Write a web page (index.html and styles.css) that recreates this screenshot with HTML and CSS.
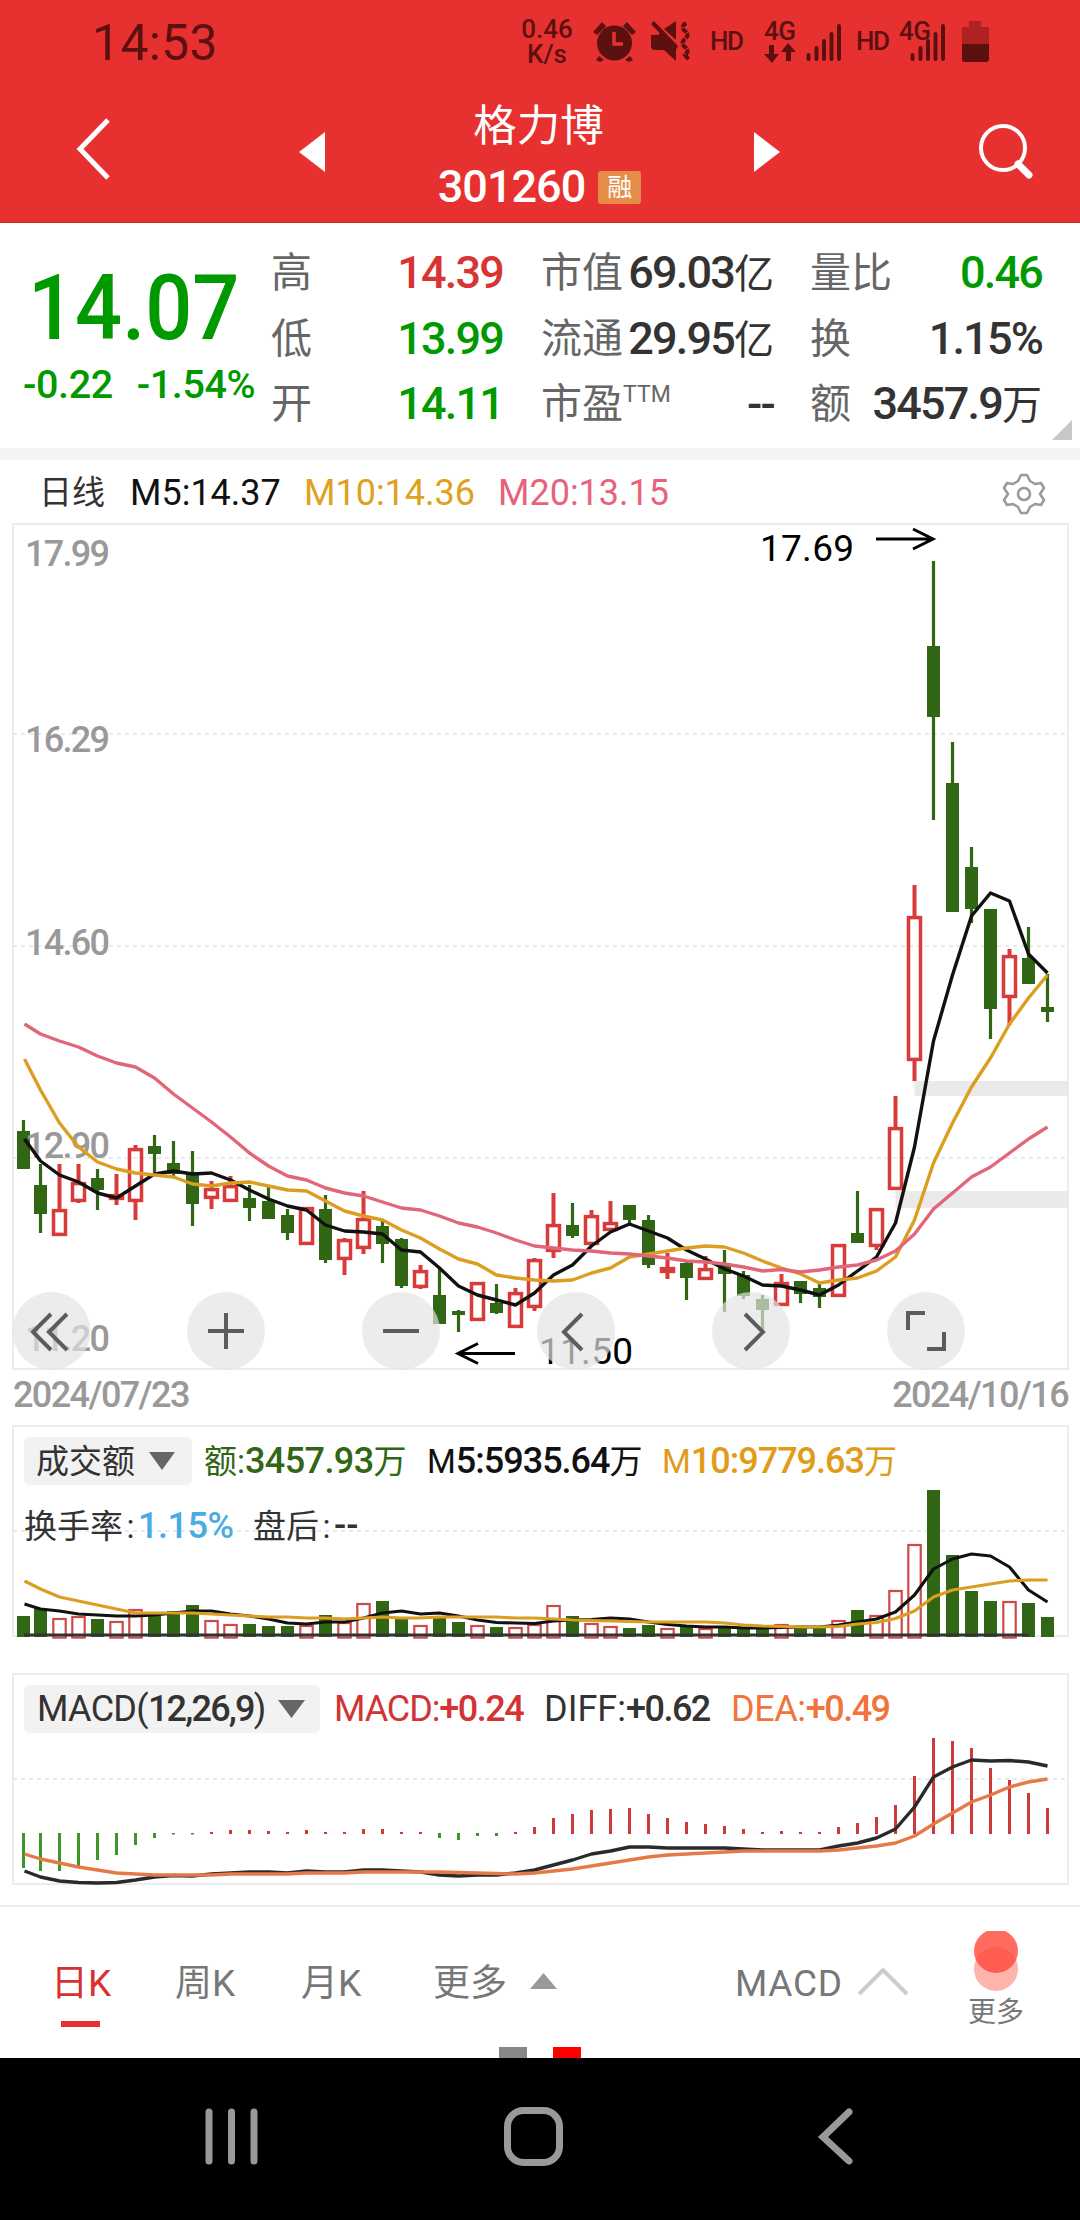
FILE: index.html
```html
<!DOCTYPE html>
<html lang="zh-CN">
<head>
<meta charset="utf-8">
<title>格力博 301260</title>
<link rel="stylesheet" href="styles.css">
</head>
<body>
<header class="top">
  <div class="status">
    <span class="clock">14:53</span>
    <div class="net"><span>0.46</span><span>K/s</span></div>
    <svg class="status-icons" width="412" height="60" viewBox="580 10 412 60">
      <g fill="#5c1010" stroke="none">
        <circle cx="614.500" cy="43" r="17.500"/>
        <path d="M593 32l9-10 4 4-9 9zM636 32l-9-10-4 4 9 9zM599 56l5 4-4 2-4-2zM630 56l-5 4 4 2 4-2z"/>
        <path d="M651 35h7l4-4 14 14v16l-12-11h-9q-4 0-4-4zM664 29l12-8v19zM651 24l3-3 24 25-2 4z"/>
        <path d="M769 45h5v9h5l-7 9-8-9h5zM786 61h5v-9h5l-8-9-7 9h5z"/>
      </g>
      <path d="M614 32v12h9" fill="none" stroke="#e73030" stroke-width="3.500"/>
      <path d="M686 23q-6 4-1 8 5 4 0 8-5 4 0 8 5 4 0 8l4 5" fill="none" stroke="#5c1010" stroke-width="4" stroke-dasharray="5.500 1"/>
      <path d="M808.500 55v4M816.500 48v11M824 41v18M831.500 34v25M839 26v33M912.500 55v4M920.500 48v11M928 41v18M935.500 34v25M943 26v33" stroke="#5c1010" stroke-width="4" stroke-linecap="round"/>
      <path d="M969 21h12v6h8v17h-27V27h7z" fill="#ae2222"/>
      <path d="M962 44h27v15q0 3-3 3h-21q-3 0-3-3z" fill="#5c1010"/>
      <g class="sys" fill="#5c1010"><text x="710" y="50" textLength="34">HD</text><text x="764" y="40" textLength="32">4G</text><text x="856" y="50" textLength="34">HD</text><text x="899" y="40" textLength="32">4G</text></g>
    </svg>
  </div>
  <div class="titlebar">
    <svg width="40" height="66" viewBox="0 0 40 66"><path d="M36 4L8 33l28 29" fill="none" stroke="#fff" stroke-width="5"/></svg>
    <svg class="prev" width="26" height="40"><path d="M26 0v40L0 20z" fill="#fff"/></svg>
    <div class="name"><h1>格力博</h1><div class="code"><b>301260</b><i>融</i></div></div>
    <svg class="next" width="26" height="40"><path d="M0 0v40l26-20z" fill="#fff"/></svg>
    <svg class="find" width="56" height="60" viewBox="0 0 56 60"><circle cx="26" cy="26" r="22" fill="none" stroke="#fff" stroke-width="4"/><path d="M41 42l11 11" stroke="#fff" stroke-width="7" stroke-linecap="round"/></svg>
  </div>
</header>

<section class="quote">
  <div class="last"><div class="price"><span>14.07</span></div><div class="chg"><span>-0.22</span><span>-1.54%</span></div></div>
  <dl class="stats s1"><dt>高</dt><dd class="up">14.39</dd><dt>低</dt><dd class="down">13.99</dd><dt>开</dt><dd class="down">14.11</dd></dl>
  <dl class="stats s2"><dt>市值</dt><dd>69.03<em>亿</em></dd><dt>流通</dt><dd>29.95<em>亿</em></dd><dt>市盈<sup>TTM</sup></dt><dd>--</dd></dl>
  <dl class="stats s3"><dt>量比</dt><dd class="down">0.46</dd><dt>换</dt><dd>1.15%</dd><dt>额</dt><dd>3457.9<em>万</em></dd></dl>
  <svg class="corner" width="20" height="20"><path d="M20 0v20H0z" fill="#c8c8c8"/></svg>
</section>

<section class="legend">
  <span class="period">日线</span><span class="m5">M5:14.37</span><span class="m10">M10:14.36</span><span class="m20">M20:13.15</span>
  <svg class="gear" width="44" height="44" viewBox="-22 -22 44 44" fill="none" stroke="#999" stroke-width="2.500" stroke-linejoin="round"><path d="M-3-19h6l3 6 5 3 6-1 3 5-4 6 4 6-3 5-6-1-5 3-3 6h-6l-3-6-5-3-6 1-3-5 4-6-4-6 3-5 6 1 5-3z"/><circle r="6"/></svg>
</section>

<section class="kline">
  <svg id="kline" width="1080" height="850" viewBox="0 522 1080 850">
    <path class="frame" d="M13 524H1068V1369H13z"/>
    <path class="grid" d="M13 734H1068M13 946H1068M13 1158H1068"/>
    <path d="M914.500 1081H1069v15H914.500zM895.500 1191H1069v17H895.500z" fill="#eaeaea"/>
    <g id="candles"></g>
    <g class="axis"><text x="25" y="566" textLength="85">17.99</text><text x="25" y="752" textLength="85">16.29</text><text x="25" y="955" textLength="85">14.60</text><text x="25" y="1158" textLength="85">12.90</text><text x="25" y="1351" textLength="85">11.20</text></g>
    <g id="averages"></g>
    <g class="mark"><text x="760" y="561" textLength="94">17.69</text><text x="539" y="1364" textLength="94">11.50</text><path d="M876 539h56M913 529l20 10-20 10M515 1353.500h-56M478 1343.500l-20 10 20 10"/></g>
    <g fill="rgba(228,228,228,.69)"><circle cx="51.500" cy="1331" r="39"/><circle cx="226" cy="1331" r="39"/><circle cx="401" cy="1331" r="39"/><circle cx="576" cy="1331" r="39"/><circle cx="751" cy="1331" r="39"/><circle cx="926" cy="1331" r="39"/></g>
    <path class="ctl" d="M51 1314l-18 18 18 18M67 1314l-18 18 18 18M208 1331h36M226 1313v36M383 1331h36M582 1314l-18 18 18 18M745 1314l18 18-18 18M908 1330v-17h17M944 1332v17h-17"/>
  </svg>
  <div class="dates"><span>2024/07/23</span><span>2024/10/16</span></div>
</section>

<section class="panel volume">
  <svg id="volume" width="1080" height="216" viewBox="0 1424 1080 216">
    <path class="frame" d="M13 1426H1068V1636H13z"/><path class="grid" d="M13 1531H1068"/>
  </svg>
  <div class="readout">
    <div class="row"><span class="pill">成交额<svg width="26" height="18"><path d="M0 0h26L13 18z" fill="#666"/></svg></span><span class="v1">额:<b>3457.93</b>万</span><span class="v2">M<b>5:5935.64</b>万</span><span class="v3">M<b>10:9779.63</b>万</span></div>
    <div class="row second"><span class="v4">换手率<u>:</u><b>1.15%</b></span><span class="v5">盘后<u>:</u><b>--</b></span></div>
  </div>
</section>

<section class="panel macd">
  <svg id="macd" width="1080" height="216" viewBox="0 1672 1080 216">
    <path class="frame" d="M13 1674H1068V1884H13z"/><path class="grid" d="M13 1779H1068"/>
  </svg>
  <div class="readout">
    <div class="row"><span class="pill wide"><span>MACD(<b>12,26,9</b>)</span><svg width="27" height="18"><path d="M0 0h27L13.500 18z" fill="#666"/></svg></span><span class="d1">MACD:<b>+0.24</b></span><span class="d2">DIFF:<b>+0.62</b></span><span class="d3">DEA:<b>+0.49</b></span></div>
  </div>
</section>

<nav class="tabs">
  <span class="tab on">日K</span><span class="tab t2">周K</span><span class="tab t3">月K</span><span class="tab t4">更多</span>
  <svg class="tri" width="27" height="16"><path d="M0 16h27L13.500 0z" fill="#999"/></svg>
  <span class="tab t5">MACD</span>
  <svg class="chev" width="54" height="30"><path d="M3 28L27 4l24 24" fill="none" stroke="#ccc" stroke-width="4"/></svg>
  <div class="more"><svg width="44" height="60"><circle cx="22" cy="38" r="22" fill="#ff4b3c" opacity=".42"/><circle cx="22" cy="20" r="22" fill="#ff4b3c" opacity=".82"/></svg><span>更多</span></div>
</nav>
<div class="pager"><i></i><i class="cur"></i></div>

<footer class="sysnav">
  <svg width="1080" height="162" viewBox="0 2058 1080 162" fill="none" stroke="#999" stroke-width="7" stroke-linecap="round"><path d="M209 2112v49M231.500 2112v49M254 2112v49"/><rect x="507.500" y="2110.500" width="52" height="52" rx="16"/><path d="M849 2112l-26 25 26 24"/></svg>
</footer>
<script src="charts.js"></script>
</body>
</html>
```

FILE: styles.css
```css
* { box-sizing: border-box; margin: 0; padding: 0; }
body {
  width: 1080px; height: 2220px; overflow: hidden; background: #fff; color: #333;
  font-family: Roboto, "Noto Sans CJK SC", sans-serif;
  display: flex; flex-direction: column;
}
svg { display: block; flex: none; }
i, em { font-style: normal; }
u { text-decoration: none; }
span, dt, dd { white-space: nowrap; }

.top { height: 223px; flex: none; background: #e73030; border-bottom: 1px solid #b9302c; color: #fff; }
.status { display: flex; height: 80px; padding-top: 10px; color: #5c1010; }
.clock { width: 421px; flex: none; padding-left: 92px; font-size: 50px; line-height: 67px; letter-spacing: .3px; }
.net { width: 68px; margin-left: 92px; padding-top: 7px; display: flex; flex-direction: column; align-items: center; font-size: 26px; font-weight: 500; line-height: 25px; }
.status-icons { margin-left: -1px; }
.sys { font: 500 26px Roboto, sans-serif; }
.titlebar { display: flex; height: 142px; }
.titlebar > svg:first-child { margin: 36px 0 0 72px; }
.titlebar .prev { margin: 52px 0 0 187px; }
.name { width: 429px; text-align: center; padding-top: 15px; }
.name h1 { font-size: 43.500px; line-height: 64px; height: 65px; font-weight: 400; padding-right: 2px; }
.titlebar .next { margin-top: 52px; }
.find { margin: 42px 0 0 197px; }
.code { display: flex; align-items: center; justify-content: center; gap: 13px; height: 54px; }
.code b { font-size: 45px; line-height: 54px; font-weight: 500; letter-spacing: -1px; }
.code i { background: #e58d48; border-radius: 3px; width: 43px; height: 33px; font-size: 25px; line-height: 33px; }

.quote { height: 237px; flex: none; display: flex; border-bottom: 12px solid #f4f4f4; padding-top: 17px; }
.last { width: 271px; color: #090; font-weight: 500; }
.price { height: 118px; padding: 15px 0 0 28px; font-size: 91px; line-height: 106px; }
.price span { display: inline-block; transform: scaleX(.91); transform-origin: left; }
.chg { display: flex; gap: 24px; padding-left: 23px; font-size: 39.500px; line-height: 54px; letter-spacing: -.400px; }
.stats { display: grid; grid-auto-rows: 65.500px; font-size: 41px; line-height: 66px; }
.stats dt { color: #666; font-weight: 400; }
.stats dd { text-align: right; font-size: 45px; font-weight: 500; letter-spacing: -1.800px; }
.stats em { font-size: 40px; font-weight: 400; letter-spacing: 0; }
.stats sup { font-size: 23px; line-height: 0; vertical-align: 16px; }
.s1 { width: 232px; grid-template-columns: 82px 1fr; }
.s2 { width: 233px; margin-left: 38px; grid-template-columns: 82px 1fr; }
.s3 { width: 232px; margin-left: 36px; grid-template-columns: 41px 1fr; }
.stats .up { color: #d93434; }
.stats .down { color: #090; }
.corner { margin: 180px 0 0 10px; }

.legend { height: 62px; flex: none; display: flex; font-size: 36px; line-height: 66px; }
.legend .period { width: 130px; padding-left: 39px; font-size: 33px; }
.legend .m5 { width: 174px; color: #111; }
.legend .m10 { width: 194px; color: #e0a020; }
.legend .m20 { width: 504px; color: #e8637a; }
.gear { margin-top: 12px; }

.kline { height: 902px; flex: none; }
.frame { fill: none; stroke: #ececec; stroke-width: 2; }
.grid { fill: none; stroke: #e4e4e4; stroke-width: 1.500; stroke-dasharray: 4 4; }
.axis { font: 500 36px Roboto, sans-serif; fill: #999; }
.mark { font: 400 37px Roboto, sans-serif; fill: #000; }
.mark path { fill: none; stroke: #000; stroke-width: 3; }
.ctl { fill: none; stroke: #5c5c5c; stroke-width: 4; }
.dates { display: flex; justify-content: space-between; padding: 0 12px 0 13px; font-size: 36px; line-height: 46px; font-weight: 500; color: #999; letter-spacing: -1.600px; }

.panel { flex: none; display: grid; }
.panel > * { grid-area: 1 / 1; }
.volume { height: 248px; }
.macd { height: 233px; }
.readout { padding: 13px 24px; font-size: 33px; }
.readout b { font-size: 36px; font-weight: 500; letter-spacing: -1px; }
.row { display: flex; height: 48px; line-height: 49px; }
.pill { display: flex; align-items: center; justify-content: space-between; background: #f2f2f2; border-radius: 6px; width: 168px; padding: 0 17px 0 12px; }
.pill.wide { width: 296px; padding: 0 15px 0 13px; letter-spacing: -.700px; }
.pill.wide b { letter-spacing: -1.800px; }
.second { margin-top: 17px; }
.v1 { width: 223px; margin-left: 12px; color: #306614; }
.v1 b { letter-spacing: -.600px; }
.v2 { width: 235px; color: #111; }
.v3 { color: #e09c18; }
.v4 { width: 229px; }
.v4 b { color: #4aabe3; letter-spacing: -.500px; }
.second u { display: inline-block; width: 15px; text-align: center; }
.v5 b { letter-spacing: 0; }
.macd .row { font-size: 36px; }
.d1 { width: 210px; margin-left: 14px; color: #d23434; letter-spacing: -1.100px; }
.d1 b { letter-spacing: -1.500px; }
.d2 { width: 187px; }
.d2 b { letter-spacing: -1.500px; }
.d3 { color: #f0743c; letter-spacing: -.400px; }
.d3 b { letter-spacing: -1.500px; }

.tabs { height: 142px; flex: none; border-top: 2px solid #eee; display: flex; color: #777; font-size: 37px; line-height: 154px; }
.on { color: #d93030; margin-left: 51px; width: 124px; background: linear-gradient(#e03030, #e03030) 10px 114px / 39px 6px no-repeat; }
.t2 { width: 126px; }
.t3 { width: 132px; }
.t4 { width: 97px; }
.tri { margin-top: 66px; }
.t5 { margin-left: 178px; width: 121px; letter-spacing: .700px; }
.chev { margin-top: 59px; }
.more { margin: 24px 0 0 56px; width: 60px; display: flex; flex-direction: column; align-items: center; }
.more span { font-size: 28px; line-height: 44px; }
.pager { height: 11px; flex: none; display: flex; gap: 26px; padding-left: 499px; }
.pager i { width: 28px; background: #888; }
.pager .cur { background: #f00; }
.sysnav { flex: 1; background: #000; }
```

FILE: charts.js
```js
const UP = '#d93a3a', DOWN = '#306614';
const cx = i => i === 0 ? 23.5 : 21.5 + 19 * i;
const svgAdd = (id, html) => document.getElementById(id).insertAdjacentHTML('beforeend', html);
const line = (ys, color, w = 3.4) =>
  `<polyline fill="none" stroke="${color}" stroke-width="${w}" stroke-linejoin="round" points="${ys.map((y, i) => `${i === 0 ? 24.5 : cx(i)},${y}`).join(' ')}"/>`;

// direction, high, body top, body bottom, low
const candles = `G 1120 1131 1169 1169|G 1164 1185 1214 1233|R 1164 1209 1236 1236|R 1164 1182 1202 1203|G 1169 1178 1190 1210
R 1174 1194 1200 1205|R 1145 1148 1202 1220|G 1135 1146 1154 1174|G 1141 1163 1174 1176|G 1151 1174 1204 1226
R 1181 1188 1199 1209|R 1176 1185 1202 1202|G 1185 1198 1208 1221|G 1187 1201 1219 1219|G 1209 1215 1233 1240
R 1207 1207 1245 1245|G 1195 1209 1260 1263|R 1238 1239 1260 1275|R 1191 1218 1249 1254|G 1220 1226 1244 1263
G 1238 1239 1286 1288|R 1265 1270 1288 1289|G 1268 1295 1324 1324|G 1310 1311 1315 1332|R 1282 1282 1321 1321
G 1284 1303 1313 1314|R 1288 1292 1328 1328|R 1258 1259 1308 1311|R 1193 1224 1252 1258|G 1203 1225 1236 1238
R 1210 1215 1245 1245|R 1201 1222 1231 1231|G 1205 1205 1220 1224|G 1215 1220 1265 1268|R 1253 1267 1273 1279
G 1260 1263 1278 1300|R 1256 1268 1280 1280|G 1250 1265 1274 1312|G 1271 1275 1296 1299|G 1295 1299 1310 1330
R 1274 1282 1306 1306|G 1281 1281 1294 1303|G 1284 1288 1297 1308|R 1244 1244 1297 1297|G 1191 1233 1243 1243
R 1208 1208 1247 1250|R 1096 1127 1190 1190|R 885 916 1061 1081|G 561 646 717 820|G 742 783 912 912
G 847 867 909 923|G 909 909 1009 1039|R 949 955 998 1025|G 927 958 984 984|G 974 1007 1012 1022`
  .split(/[|\n]/).map(s => s.split(' ').map((v, i) => i ? +v : v));

svgAdd('candles', candles.map(([d, h, t, b, l], i) => {
  const x = cx(i);
  return d === 'G'
    ? `<path d="M${x} ${h}V${l}" stroke="${DOWN}" stroke-width="3.2"/><rect x="${x - 6.5}" y="${t}" width="13" height="${b - t}" fill="${DOWN}"/>`
    : `<path d="M${x} ${h}V${t}M${x} ${b}V${l}" stroke="${UP}" stroke-width="4"/><rect x="${x - 6}" y="${t + 1.6}" width="12" height="${Math.max(b - t - 3.2, 1)}" fill="none" stroke="${UP}" stroke-width="3.5"/>`;
}).join(''));

const ma5 = [1139,1161,1175,1182,1193,1198,1186,1174,1171,1174,1173,1180,1190,1199,1206,1210,1225,1231,1232,1234,1250,1252,1268,1286,1295,1300,1305,1293,1275,1265,1246,1232,1224,1231,1238,1250,1259,1269,1276,1285,1286,1290,1295,1285,1271,1257,1223,1147,1041,975,916,893,901,954,973];
const ma10 = [1059,1090,1123,1147,1162,1169,1173,1175,1177,1184,1186,1183,1182,1186,1190,1191,1201,1211,1216,1220,1230,1238,1249,1259,1264,1275,1278,1280,1281,1280,1273,1268,1257,1254,1251,1248,1246,1247,1253,1261,1268,1274,1283,1280,1278,1271,1257,1220,1163,1123,1087,1058,1024,998,975];
const ma20 = [1024,1034,1041,1047,1056,1063,1067,1078,1094,1108,1122,1137,1153,1166,1176,1180,1188,1193,1196,1202,1208,1210,1216,1223,1227,1233,1240,1246,1248,1250,1251,1253,1254,1256,1258,1261,1262,1264,1267,1271,1269.5,1272,1270,1267,1265,1260,1251,1234,1209,1193,1177,1167,1153,1139,1127];
svgAdd('averages', line(ma5, '#111') + line(ma10, '#dc9e20') + line(ma20, '#e2667a'));

const volTop = [1616,1608,1618,1616,1619,1621,1609,1616,1611,1605,1620,1624,1624,1626,1626,1625,1615,1622,1603,1601,1619,1625,1618,1622,1625,1627,1627,1624,1605,1616,1623,1626,1628,1625,1628,1627,1628,1628,1629,1629,1624,1627,1628,1620,1610,1615,1590,1544,1490,1555,1591,1601,1601,1603,1617];
const vol5 = [1604,1609,1611,1614,1615,1616,1616,1615,1613,1611,1611,1614,1616,1619,1623,1624,1622,1622,1618,1613,1611,1614,1613,1616,1620,1622.5,1623,1623.5,1621,1620,1619.5,1618,1619,1622,1624.5,1626,1627,1627,1628,1628,1627.5,1627,1627,1625,1622,1619,1612,1595,1569,1559,1554,1556,1567,1590,1602];
const vol10 = [1581,1589,1597,1601,1605,1609,1613,1613,1613,1613,1614,1615,1616,1617,1617,1618,1618,1619,1618,1617,1618,1618,1617,1617,1617,1617,1618,1618,1619,1620,1620.5,1621,1621.5,1622,1622,1622,1622,1623,1625,1626,1626.5,1627,1627,1626.5,1624,1622.5,1618.5,1611,1597,1590,1587,1584,1581,1580,1580];
svgAdd('volume', volTop.map((t, i) => {
  const x = cx(i);
  return candles[i][0] === 'G'
    ? `<rect x="${x - 6.5}" y="${t}" width="13" height="${1637 - t}" fill="${DOWN}"/>`
    : `<rect x="${x - 6.2}" y="${t + 1}" width="12.400" height="${1636.6 - t}" fill="none" stroke="#cc4a4a" stroke-width="2.200"/>`;
}).join('') + '<path d="M24 1635H1029" stroke="#333" stroke-width="3"/>' + line(vol5, '#111', 3.1) + line(vol10, '#dc9e20', 3.1));

const bars = [1868,1871,1871,1866,1860,1855,1845,1838,1834.5,1834.5,1832,1830,1830,1831,1832,1830,1832,1832,1829,1829,1832,1832,1838,1840,1836,1836,1832,1827,1818,1814,1810,1809,1808,1814,1818,1822,1824,1826,1829,1832,1831,1832,1832,1827,1823,1817,1805,1776,1738,1741,1748,1768,1780,1793,1808];
const diff = [1871,1877,1881,1882.5,1883,1882.5,1880,1877,1875.5,1876,1874,1873,1872,1872,1873,1871,1872,1872,1870,1870,1871,1872,1875,1876,1875,1875,1873,1870,1865,1860,1854,1851,1847,1847,1848,1848,1848,1848,1849,1850,1850,1850,1850,1846,1843,1838,1829,1807,1777,1767,1760,1761,1760.5,1762,1766];
const dea = [1854,1859,1863,1867,1870,1873,1874,1875,1875,1875,1875,1874,1874,1874,1874,1873,1873,1873,1872,1872,1872,1872,1872,1872.5,1873,1873.5,1874,1873,1871,1869,1866,1863,1860,1857,1855,1854,1853,1852,1851,1851,1851,1851,1851,1850,1848,1846,1843,1836,1824,1813,1802,1795,1787,1782,1779];
// a bar that ends above the zero line is positive
svgAdd('macd', bars.map((y, i) => {
  const up = y < 1833.5 || (i >= 7 && y === 1832);
  return `<path d="M${cx(i)} ${up ? 1834 : 1833}V${y}" stroke="${up ? '#cc3a3a' : '#3c9628'}" stroke-width="3"/>`;
}).join('') + line(diff, '#2a2a2a') + line(dea, '#e57a48'));
```
